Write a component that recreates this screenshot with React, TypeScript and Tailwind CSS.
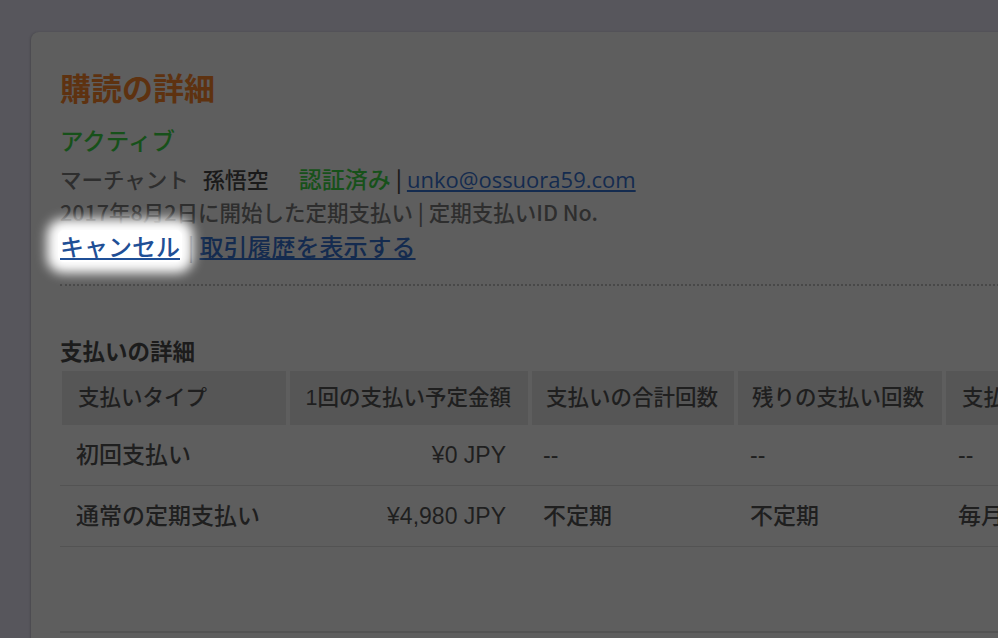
import React from 'react';

const jp = { fontFamily: '"Noto Sans CJK JP", "Liberation Sans", sans-serif' };
const mixed = { fontFamily: '"Liberation Sans", "Noto Sans CJK JP", sans-serif' };

const cols = 'grid grid-cols-[224px_238px_202px_204px_1fr] gap-x-[4px]';

const rows = [
  { type: '初回支払い', amount: '¥0 JPY', total: '--', left: '--', cycle: '--' },
  { type: '通常の定期支払い', amount: '¥4,980 JPY', total: '不定期', left: '不定期', cycle: '毎月' },
];

export default function App() {
  return (
    <div className="w-[998px] h-[638px] overflow-hidden bg-[#57565c] pl-[31px] pt-[32px]" style={jp}>
      <div className="w-[1000px] h-[700px] bg-[#5e5e5e] rounded-tl-[8px] shadow-[-1px_0_2px_rgba(0,0,0,0.15)] pl-[29px] pt-[35px]">
        <h1 className="text-[31px] leading-[40px] font-bold text-[#5e3210]">購読の詳細</h1>
        <p className="mt-[17px] text-[23.5px] leading-[32px] font-medium text-[#17511a]">アクティブ</p>
        <p className="mt-[7px] text-[22px] leading-[30px] font-medium text-[#2e2e2e] whitespace-nowrap">
          <span className="text-[21.5px]">マーチャント</span>
          <span className="ml-[14px] text-[#1a1a1a]">孫悟空</span>
          <span className="ml-[30px] text-[23px] text-[#17511a]">認証済み</span>
          <span className="text-[#1a1a1a]"> | </span>
          <a className="underline font-normal text-[#142b4f] text-[22px]" style={{ fontFamily: '"Open Sans", sans-serif' }}>unko@ossuora59.com</a>
        </p>
        <p className="mt-[4px] text-[21.5px] leading-[28px] font-medium text-[#2e2e2e] whitespace-nowrap">
          2017年8月2日に開始した定期支払い | 定期支払いID No.
        </p>
        <p className="mt-[4px] text-[24px] leading-[32px] font-medium text-[#1a1a1a] whitespace-nowrap">
          <span className="relative inline-block bg-white rounded-[6px] shadow-[0_0_12px_11px_#ffffff] -ml-[2px] px-[2px]">
            <a className="underline text-[#1f4f96]">キャンセル</a>
          </span>
          <span> | </span>
          <a className="underline text-[#142b4f]">取引履歴を表示する</a>
        </p>
        <div className="mt-[22px] border-t-2 border-dotted border-[#484848]" />

        <h2 className="mt-[49px] text-[22.5px] leading-[30px] font-bold text-[#1c1c1c]">支払いの詳細</h2>

        <div className="mt-[6px] text-[#1f1f1f] font-medium" style={mixed}>
          <div className={`${cols} h-[54px] pl-[2px] text-[21.5px]`}>
            <div className="bg-[#565656] flex items-center pl-[16px]">支払いタイプ</div>
            <div className="bg-[#565656] flex items-center justify-end pr-[17px]">1回の支払い予定金額</div>
            <div className="bg-[#565656] flex items-center pl-[14px]">支払いの合計回数</div>
            <div className="bg-[#565656] flex items-center pl-[14px]">残りの支払い回数</div>
            <div className="bg-[#565656] flex items-center pl-[16px] whitespace-nowrap">支払いサイクル</div>
          </div>
          {rows.map((r) => (
            <div key={r.type} className={`${cols} h-[61px] pl-[2px] border-b border-[#535353] text-[23px] items-center`}>
              <div className="pl-[14px]">{r.type}</div>
              <div className="text-right pr-[22px]">{r.amount}</div>
              <div className="pl-[11px]">{r.total}</div>
              <div className="pl-[12px]">{r.left}</div>
              <div className="pl-[12px]">{r.cycle}</div>
            </div>
          ))}
        </div>
        <div className="mt-[84px] border-t-2 border-[#535353]" />
      </div>
    </div>
  );
}
